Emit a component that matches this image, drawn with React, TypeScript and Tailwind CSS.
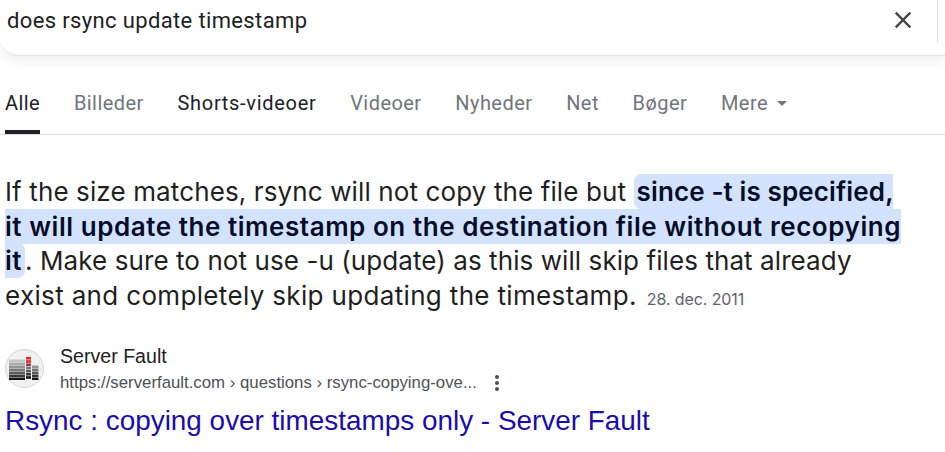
const tabs = [
  { label: 'Alle', className: 'text-[#202124] border-b-[4px] border-[#202124]' },
  { label: 'Billeder', className: 'text-[#70757a]' },
  { label: 'Shorts-videoer', className: 'text-[#202124] tracking-[0.7px]' },
  { label: 'Videoer', className: 'text-[#70757a]' },
  { label: 'Nyheder', className: 'text-[#70757a]' },
  { label: 'Net', className: 'text-[#70757a]' },
  { label: 'Bøger', className: 'text-[#70757a]' },
]

function ServerFaultIcon() {
  const rows = [0, 1, 2, 3, 4, 5, 6]
  const shade = ['#c4c4c4', '#acacac', '#939393', '#787878', '#5a5a5a', '#383838', '#141414']
  return (
    <svg width="39" height="39" viewBox="0 0 39 39" className="shrink-0 mt-[6px]">
      <circle cx="19.5" cy="19.5" r="19" fill="#f1f1f1" stroke="#d6d6d6" />
      {rows.map((r) => (
        <g key={r}>
          <rect x="4" y={10.5 + r * 3} width="16" height="2.5" fill={shade[r]} />
          <rect x="21" y={8 + r * 3.2} width="5" height="2.6" fill={r < 2 ? '#e02b2b' : r < 3 ? '#a33' : shade[r]} />
          {r > 1 && <rect x="27" y={10.5 + r * 3} width="6.5" height="2.5" fill={shade[r]} />}
        </g>
      ))}
    </svg>
  )
}

export default function App() {
  return (
    <div className="w-[945px] h-[452px] overflow-hidden bg-white">
      <div className="h-[56px] bg-white border-b border-[#dfe1e5] rounded-bl-[20px] shadow-[0_4px_12px_rgba(32,33,36,0.08)] flex items-start font-['Roboto',sans-serif] -ml-[1px]">
        <div className="flex-1 pl-[8px] pt-[6px] text-[22px] leading-[30px] tracking-[0.36px] text-[#202124]">
          does rsync update timestamp
        </div>
        <svg width="28" height="28" viewBox="0 0 24 24" className="mt-[6px] mr-[20px]" fill="#444746">
          <path d="M19 6.41 17.59 5 12 10.59 6.41 5 5 6.41 10.59 12 5 17.59 6.41 19 12 13.41 17.59 19 19 17.59 13.41 12z" />
        </svg>
        <div className="w-px h-[43px] bg-[#dadce0] mr-[7px]" />
      </div>

      <div className="h-[79px] border-b border-[#dadce0] pl-[5px] flex items-end gap-[33.7px] font-['Roboto',sans-serif] text-[20px] font-[450] tracking-[0.45px]">
        {tabs.map((t) => (
          <div key={t.label} className={`${t.className} h-[44px] leading-[26px] whitespace-nowrap`}>
            {t.label}
          </div>
        ))}
        <div className="h-[44px] leading-[26px] text-[#70757a] flex items-start">
          Mere
          <span className="ml-[9px] mt-[11px] w-0 h-0 border-x-[5px] border-x-transparent border-t-[5px] border-t-[#70757a]" />
        </div>
      </div>

      <p className="mt-[40px] pl-[5px] w-[908px] font-['Inter',sans-serif] text-[26px] leading-[34.7px] tracking-[0.12px] text-[#1f1f1f]">
        If the size matches, rsync will not copy the file but{' '}
        <span className="bg-[#d3e3fd] rounded-[7px] font-semibold text-[#040c28] py-[2px] pl-[3px] pr-[3px]">
          since -t is specified,{' '}
          <span className="tracking-[0.55px]">it will update the timestamp on the destination file without recopying it</span>
        </span>
        <span className="tracking-[0.08px]">. Make sure to not use -u (update) as this will skip files that already </span>
        <span className="tracking-[0.34px]">exist and completely skip updating the timestamp.</span>
        <span className="ml-[10px] text-[16px] tracking-[-0.1px] text-[#5f6368]">28. dec. 2011</span>
      </p>

      <div className="mt-[26px] pl-[5px] flex items-start gap-[16px] font-['Liberation_Sans',sans-serif]">
        <ServerFaultIcon />
        <div className="flex flex-col">
          <div className="text-[19.6px] leading-[26px] text-[#202124]">Server Fault</div>
          <div className="mt-[2px] flex items-center text-[16.8px] leading-[24px] text-[#4d5156]">
            https://serverfault.com › questions › rsync-copying-ove...
            <svg width="24" height="24" viewBox="0 0 24 24" className="ml-[8px]" fill="#4d5156">
              <path d="M12 8c1.1 0 2-.9 2-2s-.9-2-2-2-2 .9-2 2 .9 2 2 2zm0 2c-1.1 0-2 .9-2 2s.9 2 2 2 2-.9 2-2-.9-2-2-2zm0 6c-1.1 0-2 .9-2 2s.9 2 2 2 2-.9 2-2-.9-2-2-2z" />
            </svg>
          </div>
        </div>
      </div>
      <div className="pl-[5px] mt-[8px] font-['Liberation_Sans',sans-serif] text-[27.9px] leading-[36px] text-[#1a0dab]">
        Rsync : copying over timestamps only - Server Fault
      </div>
    </div>
  )
}
